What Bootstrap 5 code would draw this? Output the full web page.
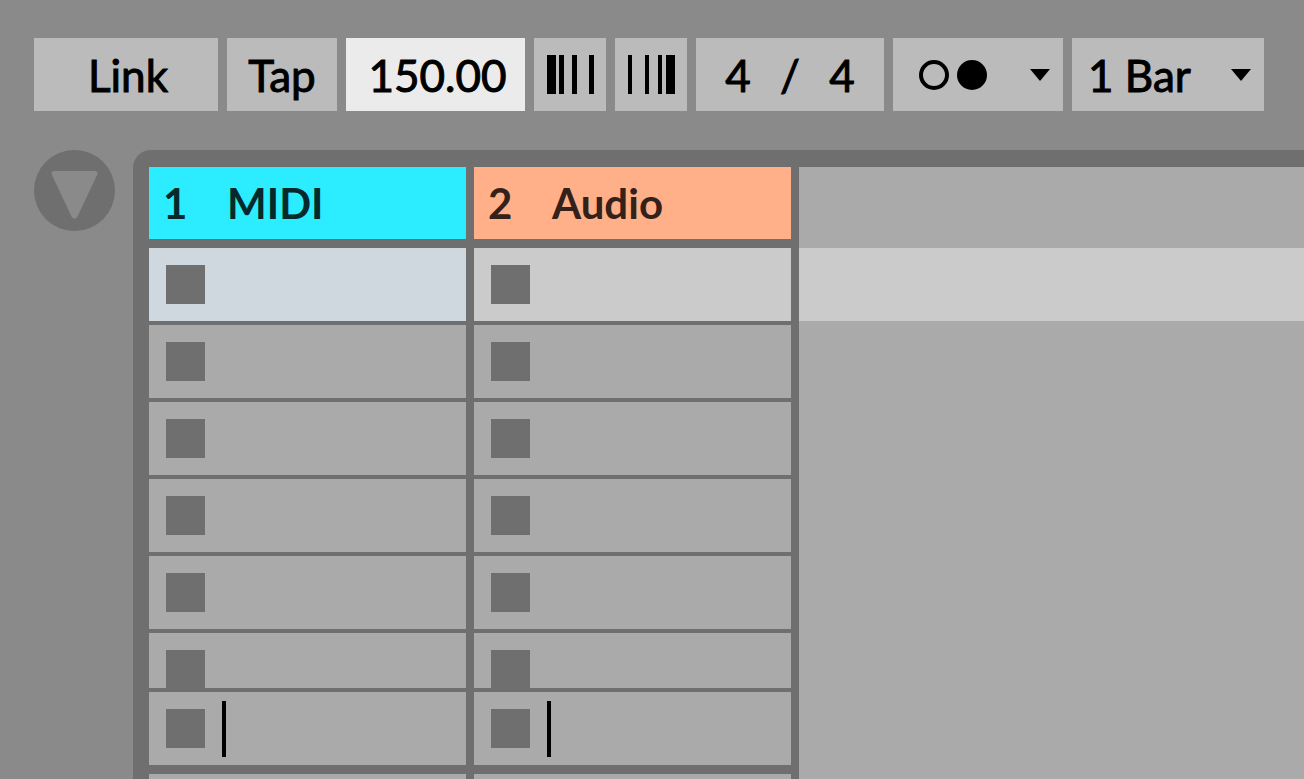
<!DOCTYPE html>
<html lang="en">
<head>
<meta charset="utf-8">
<meta name="viewport" content="width=device-width, initial-scale=1">
<title>Session View</title>
<link href="https://cdn.jsdelivr.net/npm/bootstrap@5.3.0/dist/css/bootstrap.min.css" rel="stylesheet">
<style>
  body { background: #8a8a8a; color: #000; font-family: Lato, "Open Sans", sans-serif; font-size: 44px; font-weight: 400; line-height: 48px; }
  .transport { padding: 38px 40px 0 34px; gap: 9px; -webkit-text-stroke: 1px #000; }
  .ctl { height: 73px; border: 0; border-radius: 0; background-color: #bbb; color: #000; font: inherit; padding: 0; min-width: 0; flex: 1 1 auto; }
  .w-link { flex-basis: 184px; padding-left: 4px; }
  .w-tap { flex-basis: 110px; }
  .w-tempo { flex-basis: 179px; padding-left: 4px; background-color: #ebebeb; }
  .w-nudge { flex-basis: 72px; }
  .w-sig { flex-basis: 188px; }
  .w-metro { flex-basis: 170px; padding: 0 12px 0 24px; }
  .w-quant { flex-basis: 192px; padding: 0 40px 0 16px; appearance: none;
    background: #bbb url("data:image/svg+xml,%3Csvg xmlns='http://www.w3.org/2000/svg' viewBox='0 0 22 14'%3E%3Cpath d='M1 1h20L11 13z'/%3E%3C/svg%3E") no-repeat right 12px center / 22px 14px; }
  .w-sig input { width: 40px; border: 0; padding: 0; background: transparent; color: inherit; font: inherit; }
  .session { margin-top: 39px; padding-left: 34px; gap: 18px; min-height: 0; }
  .fold { width: 81px; height: 81px; }
  .tracks { background: #6f6f6f; border-top-left-radius: 18px; padding: 17px 0 0 16px; gap: 8px; min-width: 0; }
  .track { flex: 0 1 317px; min-width: 0; }
  .track-title { height: 72px; margin-bottom: 9px; padding: 0 14px; font-size: 42px; font-weight: 700; }
  .track-title .num { width: 64px; }
  .midi { background: #2bedff; color: #06292c; }
  .audio { background: #ffb088; color: #33211a; }
  .slots { gap: 4px; min-height: 0; }
  .slot { height: 73px; flex: none; background: #aaa; padding: 17px 17px 0; gap: 17px; overflow: hidden; }
  .slot.cut { height: 55px; }
  .slot.lit { background: #cbcbcb; }
  .slot.lit-midi { background: #cfd8de; }
  .slot.insert { margin-bottom: 5px; }
  .slot.rest { height: auto; flex: 1 1 0; padding-top: 0; }
  .stop { width: 39px; height: 39px; flex: none; border: 0; padding: 0; background: #6f6f6f; }
  .cursor { width: 4px; height: 56px; margin-top: -8px; background: #000; }
  .scenes { background: #aaa; min-width: 0; }
  .scene-lit { height: 73px; margin-top: 81px; background: #cbcbcb; }
</style>
</head>
<body>
<div class="d-flex flex-column vh-100 overflow-hidden">
  <header class="transport d-flex" role="toolbar" aria-label="Transport">
    <button type="button" class="ctl w-link">Link</button>
    <button type="button" class="ctl w-tap">Tap</button>
    <input type="text" class="ctl w-tempo text-center" value="150.00" aria-label="Tempo">
    <button type="button" class="ctl w-nudge d-flex align-items-center justify-content-center" aria-label="Nudge down">
      <svg width="48" height="39" viewBox="0 0 48 39" aria-hidden="true"><path d="M1 0h9v39H1zM13 0h5v39h-5zM26 0h5v39h-5zM43 0h5v39h-5z"/></svg>
    </button>
    <button type="button" class="ctl w-nudge d-flex align-items-center justify-content-center" aria-label="Nudge up">
      <svg width="48" height="39" viewBox="0 0 48 39" aria-hidden="true"><path d="M1 0h4v39H1zM18 0h4v39h-4zM31 0h4v39h-4zM39 0h9v39h-9z"/></svg>
    </button>
    <div class="ctl w-sig d-flex align-items-center justify-content-evenly">
      <input type="text" class="text-center" value="4" aria-label="Beats per bar"><span>/</span><input type="text" class="text-center" value="4" aria-label="Beat value">
    </div>
    <button type="button" class="ctl w-metro d-flex align-items-center justify-content-between" aria-label="Metronome">
      <svg width="72" height="32" viewBox="0 0 72 32" aria-hidden="true"><circle cx="17" cy="16" r="13" fill="none" stroke="#000" stroke-width="4"/><circle cx="55" cy="16" r="15"/></svg>
      <svg width="22" height="14" viewBox="0 0 22 14" aria-hidden="true"><path d="M1 1h20L11 13z"/></svg>
    </button>
    <select class="ctl w-quant" aria-label="Quantization"><option>1 Bar</option></select>
  </header>

  <main class="session d-flex flex-grow-1">
    <button type="button" class="fold btn p-0 border-0 flex-shrink-0 d-flex" aria-label="Fold tracks">
      <svg width="81" height="81" viewBox="0 0 81 81" aria-hidden="true"><circle cx="40.500" cy="40.500" r="40.500" fill="#6f6f6f"/><path d="M20 23.500h41L41 66h-1z" fill="#8a8a8a" stroke="#8a8a8a" stroke-width="5" stroke-linejoin="round"/></svg>
    </button>
    <div class="tracks d-flex flex-grow-1">
      <section class="track d-flex flex-column">
        <div class="track-title midi d-flex align-items-center"><span class="num">1</span><span>MIDI</span></div>
        <div class="slots d-flex flex-column flex-grow-1">
          <div class="slot lit-midi"><button type="button" class="stop d-block" aria-label="Stop clip 1"></button></div>
          <div class="slot"><button type="button" class="stop d-block" aria-label="Stop clip 2"></button></div>
          <div class="slot"><button type="button" class="stop d-block" aria-label="Stop clip 3"></button></div>
          <div class="slot"><button type="button" class="stop d-block" aria-label="Stop clip 4"></button></div>
          <div class="slot"><button type="button" class="stop d-block" aria-label="Stop clip 5"></button></div>
          <div class="slot cut"><button type="button" class="stop d-block" aria-label="Stop clip 6"></button></div>
          <div class="slot insert d-flex"><button type="button" class="stop" aria-label="Stop track"></button><span class="cursor"></span></div>
          <div class="slot rest"></div>
        </div>
      </section>
      <section class="track d-flex flex-column">
        <div class="track-title audio d-flex align-items-center"><span class="num">2</span><span>Audio</span></div>
        <div class="slots d-flex flex-column flex-grow-1">
          <div class="slot lit"><button type="button" class="stop d-block" aria-label="Stop clip 1"></button></div>
          <div class="slot"><button type="button" class="stop d-block" aria-label="Stop clip 2"></button></div>
          <div class="slot"><button type="button" class="stop d-block" aria-label="Stop clip 3"></button></div>
          <div class="slot"><button type="button" class="stop d-block" aria-label="Stop clip 4"></button></div>
          <div class="slot"><button type="button" class="stop d-block" aria-label="Stop clip 5"></button></div>
          <div class="slot cut"><button type="button" class="stop d-block" aria-label="Stop clip 6"></button></div>
          <div class="slot insert d-flex"><button type="button" class="stop" aria-label="Stop track"></button><span class="cursor"></span></div>
          <div class="slot rest"></div>
        </div>
      </section>
      <section class="scenes flex-grow-1" aria-label="Scenes"><div class="scene-lit"></div></section>
    </div>
  </main>
</div>
<script src="https://cdn.jsdelivr.net/npm/bootstrap@5.3.0/dist/js/bootstrap.bundle.min.js"></script>
</body>
</html>
